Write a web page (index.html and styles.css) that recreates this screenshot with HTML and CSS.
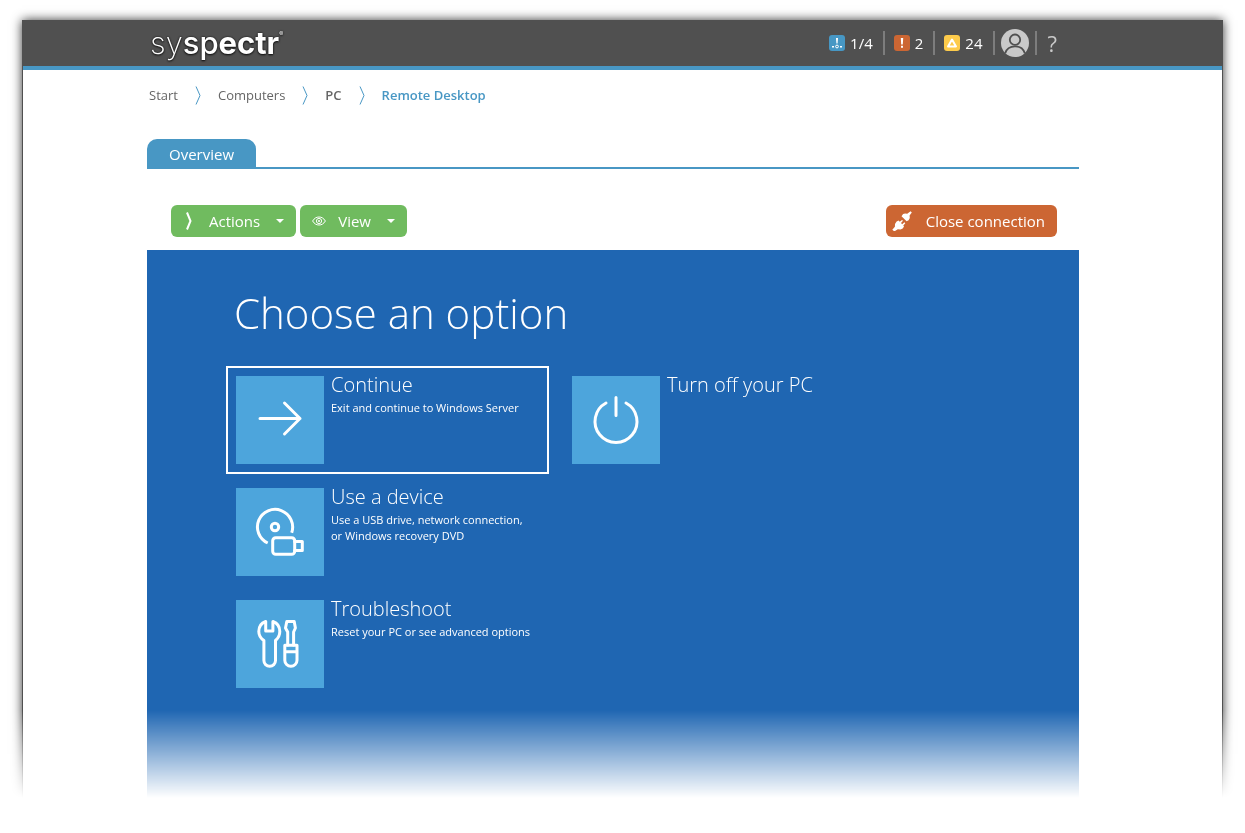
FILE: index.html
```html
<!DOCTYPE html>
<html lang="en">
<head>
    <meta charset="UTF-8">
    <meta name="viewport" content="width=device-width, initial-scale=1.0">
    <title>syspectr - Remote Desktop</title>
    <link rel="stylesheet" href="styles.css">
</head>
<body>
    <div class="page">
        <div class="window">
            <header class="header">
                <div class="container header-inner">
                    <a class="logo" href="#"><span class="logo-thin">sy</span><span class="logo-medium">sp</span><span class="logo-bold">ectr</span><sup>®</sup></a>
                    <nav class="status">
                        <a class="status-item" href="#">
                            <svg width="16" height="16" viewBox="0 0 16 16">
                                <rect width="16" height="16" rx="3" fill="#4797c4"/>
                                <path d="M7 3h2l-.4 5.500h-1.200z" fill="#fff"/>
                                <circle cx="8" cy="11.500" r="1.400" fill="none" stroke="#fff"/>
                                <path d="M3 11h2v1.500H3zM11 11h2v1.500h-2z" fill="#fff"/>
                            </svg>
                            1/4
                        </a>
                        <a class="status-item" href="#">
                            <svg width="16" height="16" viewBox="0 0 16 16">
                                <rect width="16" height="16" rx="3" fill="#cc6633"/>
                                <path d="M6.800 3h2.400l-.4 6.500H7.200zM7 10.800h2v2H7z" fill="#fff"/>
                            </svg>
                            2
                        </a>
                        <a class="status-item" href="#">
                            <svg width="16" height="16" viewBox="0 0 16 16">
                                <rect width="16" height="16" rx="3" fill="#fdcb4b"/>
                                <path d="M8 4.500l4 7H4z" fill="none" stroke="#fff" stroke-width="2" stroke-linejoin="round"/>
                            </svg>
                            24
                        </a>
                        <a class="status-item avatar" href="#" aria-label="Account">
                            <svg width="28" height="28" viewBox="0 0 28 28">
                                <circle cx="14" cy="14" r="14" fill="#c9c9c9"/>
                                <circle cx="14" cy="10.700" r="5.200" fill="none" stroke="#505050" stroke-width="1.800"/>
                                <path d="M4.200 24.200C5.500 19.800 9 17.300 14 17.300s8.500 2.500 9.800 6.900" fill="none" stroke="#505050" stroke-width="1.800"/>
                            </svg>
                        </a>
                        <a class="status-item help" href="#">?</a>
                    </nav>
                </div>
            </header>

            <main class="container">
                <nav class="breadcrumb">
                    <a href="#">Start</a>
                    <svg width="6" height="19" viewBox="0 0 6 19"><path d="M1 .5l4 9-4 9"/></svg>
                    <a href="#">Computers</a>
                    <svg width="6" height="19" viewBox="0 0 6 19"><path d="M1 .5l4 9-4 9"/></svg>
                    <a class="strong" href="#">PC</a>
                    <svg width="6" height="19" viewBox="0 0 6 19"><path d="M1 .5l4 9-4 9"/></svg>
                    <a class="current" href="#">Remote Desktop</a>
                </nav>

                <div class="tabs">
                    <a class="tab" href="#">Overview</a>
                </div>

                <div class="toolbar">
                    <button class="btn" type="button">
                        <svg width="14" height="20" viewBox="0 0 14 20"><path d="M4 1.500l3.500 8.500L4 18.500" fill="none" stroke="#fff" stroke-width="2"/></svg>
                        Actions
                        <span class="caret"></span>
                    </button>
                    <button class="btn" type="button">
                        <svg width="14" height="10" viewBox="0 0 14 10">
                            <path d="M.6 5C2.500 2 4.500 1 7 1s4.500 1 6.400 4C11.500 8 9.500 9 7 9S2.500 8 .6 5z" fill="none" stroke="#fff"/>
                            <circle cx="7" cy="5" r="2.600" fill="none" stroke="#fff"/>
                            <circle cx="7" cy="5" r="1" fill="#fff"/>
                        </svg>
                        View
                        <span class="caret"></span>
                    </button>
                    <button class="btn btn-close" type="button">
                        <svg width="20" height="20" viewBox="0 0 20 20" fill="#fff">
                            <path d="M9.500 5.200l1.600-2.200 2-.6 2.100.3L18.600.3l1.200 1.200-2.200 3 .2 2.500-1.200 2.200-2 1z"/>
                            <path d="M4.600 10.400l2-.8 1.100 1.200 2.300-1.900 1 .9-2 2.200 1.200 1.200 2.200-1.900.9 1-2 2.200.7 1.100-1.300 1.900-2.200.9-2.700-.2-3.400 2.200L.3 18.800 2.900 15.700l.1-2.800z"/>
                        </svg>
                        Close connection
                    </button>
                </div>

                <section class="screen">
                    <h1>Choose an option</h1>
                    <div class="options">
                        <button class="option selected" type="button">
                            <svg class="tile" viewBox="0 0 88 88"><path d="M24 42.500h40M48.500 27L64 42.500 48.500 58"/></svg>
                            <span class="option-text">
                                <span class="option-title">Continue</span>
                                <span class="option-note">Exit and continue to Windows Server</span>
                            </span>
                        </button>
                        <button class="option" type="button">
                            <svg class="tile" viewBox="0 0 88 88"><path d="M34 27a21 21 0 1 0 20 0M44 21.500v18"/></svg>
                            <span class="option-text">
                                <span class="option-title">Turn off your PC</span>
                            </span>
                        </button>
                        <button class="option" type="button">
                            <svg class="tile" viewBox="0 0 88 88">
                                <path class="flat" d="M55.700 44.700A17.600 17.600 0 1 0 31.700 55"/>
                                <circle cx="39" cy="39" r="3.700"/>
                                <rect x="36.700" y="49.700" width="22" height="16.500" rx="3"/>
                                <path d="M58.700 53.500h7.600v9h-7.600"/>
                            </svg>
                            <span class="option-text">
                                <span class="option-title">Use a device</span>
                                <span class="option-note">Use a USB drive, network connection,<br>or Windows recovery DVD</span>
                            </span>
                        </button>
                        <button class="option option-last" type="button">
                            <svg class="tile" viewBox="0 0 88 88">
                                <path d="M29.700 21.500V31h7.200v-9.500c4.100 1.500 6.900 5.500 6.900 10 0 4-2 7-4.300 9v20a5.800 5.800 0 0 1-11.600 0v-20c-2.900-2-5.100-5-5.100-9 0-4.500 2.700-8.500 6.900-10z"/>
                                <path d="M51.700 45V32l-2.200-4 1.300-6.500h7.400l1.200 6.500-1.800 4v13"/>
                                <path d="M48.800 45.200H61v15a6.100 6.100 0 0 1-12.200 0zM48.800 51.700H61"/>
                            </svg>
                            <span class="option-text">
                                <span class="option-title">Troubleshoot</span>
                                <span class="option-note">Reset your PC or see advanced options</span>
                            </span>
                        </button>
                    </div>
                </section>
            </main>
        </div>
    </div>
</body>
</html>
```
FILE: styles.css
```css
* {
    box-sizing: border-box;
}

body {
    margin: 0;
    background: #fff;
    color: #666;
    font-family: 'Open Sans', 'Noto Sans', sans-serif;
    font-size: 15px;
}

a {
    color: inherit;
    text-decoration: none;
}

button {
    font-family: inherit;
    cursor: pointer;
}

/* the whole window fades out at the bottom */
.page {
    padding: 20px 22px 0;
    -webkit-mask-image: linear-gradient(to top, transparent, #000 88px);
    mask-image: linear-gradient(to top, transparent, #000 88px);
}

.window {
    border: 1px solid #505050;
    border-width: 0 1px;
    box-shadow: 0 0 10px rgba(0, 0, 0, 0.8);
}

.container {
    max-width: 932px;
    margin: 0 auto;
}

.header {
    height: 50px;
    padding-right: 19px;
    background: #505050;
    border-bottom: 4px solid #4897c4;
}

main {
    padding-right: 19px;
}

main.container {
    max-width: 951px;
    padding-right: 19px;
}

.header-inner {
    display: flex;
    justify-content: space-between;
    align-items: center;
    height: 46px;
    padding: 0 22px 0 3px;
}

.logo {
    color: #fff;
    font-family: 'Inter', 'Liberation Sans', sans-serif;
    font-size: 31px;
    line-height: 42px;
    text-shadow: 0 0 2px #111, 0 1px 2px #111;
}

.logo-thin {
    font-weight: 200;
}

.logo-medium {
    font-weight: 500;
}

.logo-bold {
    font-weight: 700;
}

.logo sup {
    font-size: 6px;
    line-height: 1;
    vertical-align: 18px;
}

.status {
    display: flex;
    align-items: center;
    color: #fff;
}

.status-item {
    display: flex;
    align-items: center;
    gap: 5px;
    height: 24px;
    padding: 0 10px 0 9px;
    border-left: 2px solid #7d7d7d;
}

.status-item:first-child {
    border-left: 0;
}

.status-item.avatar {
    padding: 0 6px;
}

.status-item.help {
    padding-right: 0;
    padding-left: 11px;
    color: #c9c9c9;
    font-size: 22px;
}

.breadcrumb {
    display: flex;
    align-items: center;
    gap: 17px;
    height: 50px;
    padding-left: 2px;
    font-size: 13px;
}

.breadcrumb path {
    fill: none;
    stroke: #4897c4;
}

.breadcrumb .strong {
    font-weight: 600;
}

.breadcrumb .current {
    color: #4897c4;
    font-weight: 600;
}

.tabs {
    display: flex;
    margin-top: 19px;
    border-bottom: 2px solid #4897c4;
}

.tab {
    padding: 2px 22px 0;
    border-radius: 10px 10px 0 0;
    background: #4897c4;
    color: #fff;
    line-height: 26px;
}

.toolbar {
    display: flex;
    gap: 4px;
    padding: 36px 22px 13px 24px;
}

.btn {
    display: flex;
    align-items: center;
    gap: 12px;
    height: 32px;
    padding: 0 12px;
    border: 0;
    border-radius: 6px;
    background: #70bb5f;
    color: #fff;
    font-size: 15px;
}

.btn-close {
    gap: 14px;
    margin-left: auto;
    padding-left: 6px;
    background: #cc6633;
}

.caret {
    margin-left: 4px;
    border: 4px solid transparent;
    border-top-color: #fff;
    border-bottom: 0;
}

.screen {
    padding: 30px 79px 100px;
    background: #1f66b2;
    color: #fff;
}

.screen h1 {
    margin: 0 0 20px 8px;
    font-size: 42px;
    font-weight: 300;
    line-height: 66px;
}

.options {
    display: grid;
    grid-template-columns: repeat(2, 323px);
    gap: 4px 13px;
}

.option {
    display: flex;
    gap: 7px;
    padding: 8px;
    border: 2px solid transparent;
    background: none;
    color: #fff;
    text-align: left;
}

.option.selected {
    border-color: #fff;
}

.option-last {
    grid-column: 1;
}

.tile {
    flex: none;
    width: 88px;
    height: 88px;
    background: #4da5dc;
    fill: none;
    stroke: #fff;
    stroke-width: 3px;
    stroke-linecap: round;
    stroke-linejoin: round;
}

.tile .flat {
    stroke-linecap: butt;
}

.option-text {
    white-space: nowrap;
}

.option-title {
    display: block;
    margin-bottom: 6px;
    font-size: 20px;
    font-weight: 300;
    line-height: 18px;
}

.option-note {
    display: block;
    font-size: 11px;
    line-height: 16px;
}
```
